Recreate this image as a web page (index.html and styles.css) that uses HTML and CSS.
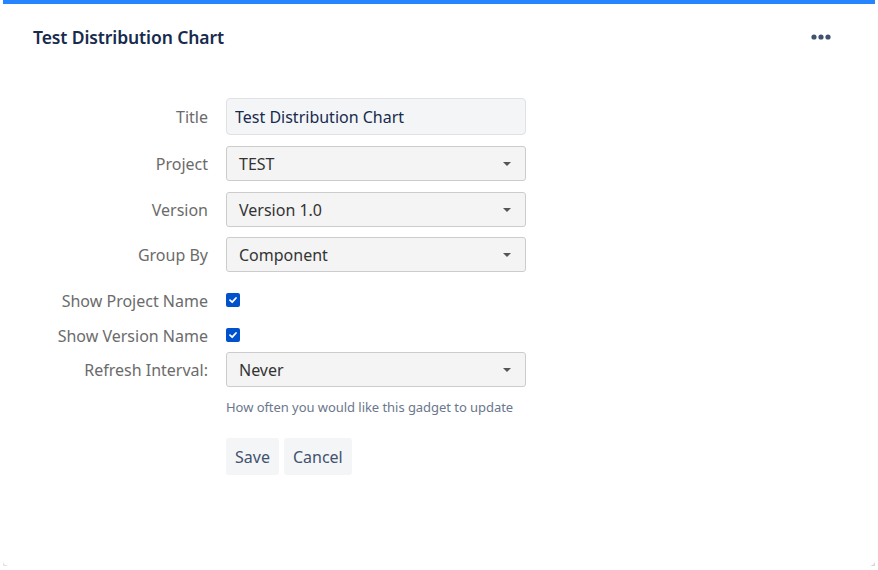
FILE: index.html
```html
<!DOCTYPE html>
<html lang="en">

<head>
    <meta charset="UTF-8">
    <meta name="viewport" content="width=device-width, initial-scale=1.0">
    <title>Test Distribution Chart</title>
    <link rel="stylesheet" href="styles.css">
</head>

<body>
    <div class="gadget">
        <div class="gadget-header">
            <h1>Test Distribution Chart</h1>
            <svg class="more" width="20" height="6" viewBox="0 0 20 6">
                <circle cx="3" cy="3" r="2.6" fill="#42526e"/>
                <circle cx="10" cy="3" r="2.6" fill="#42526e"/>
                <circle cx="17" cy="3" r="2.6" fill="#42526e"/>
            </svg>
        </div>

        <form class="gadget-form">
            <div class="field field-title">
                <label>Title</label>
                <input type="text" class="text-input" value="Test Distribution Chart">
            </div>

            <div class="field">
                <label>Project</label>
                <div class="select">TEST<span class="caret"></span></div>
            </div>

            <div class="field field-version">
                <label>Version</label>
                <div class="select">Version 1.0<span class="caret"></span></div>
            </div>

            <div class="field field-group">
                <label>Group By</label>
                <div class="select">Component<span class="caret"></span></div>
            </div>

            <div class="field field-check">
                <label>Show Project Name</label>
                <span class="checkbox">
                    <svg width="10" height="10" viewBox="0 0 10 10"><path d="M2 5.2 L4.2 7.2 L8 3" fill="none" stroke="#fff" stroke-width="1.8" stroke-linecap="round" stroke-linejoin="round"/></svg>
                </span>
            </div>

            <div class="field field-check">
                <label>Show Version Name</label>
                <span class="checkbox">
                    <svg width="10" height="10" viewBox="0 0 10 10"><path d="M2 5.2 L4.2 7.2 L8 3" fill="none" stroke="#fff" stroke-width="1.8" stroke-linecap="round" stroke-linejoin="round"/></svg>
                </span>
            </div>

            <div class="field field-last">
                <label>Refresh Interval:</label>
                <div class="select">Never<span class="caret"></span></div>
            </div>

            <p class="help">How often you would like this gadget to update</p>

            <div class="buttons">
                <button type="button">Save</button>
                <button type="button">Cancel</button>
            </div>
        </form>
    </div>
</body>

</html>
```

FILE: styles.css
```css
body {
    margin: 0 3px;
    background-color: #fff;
    font-family: "Noto Sans", "Open Sans", sans-serif;
    color: #172b4d;
}

.gadget {
    height: 562px;
    border-top: 4px solid #2684ff;
    border-radius: 0 0 5px 5px;
    background-color: #fff;
    box-shadow: 1px 2px 5px rgba(0, 0, 0, 0.25), 0 0 2px rgba(0, 0, 0, 0.12);
}

.gadget-header {
    display: flex;
    align-items: center;
    justify-content: space-between;
    height: 66px;
    padding: 0 44px 0 30px;
}

.gadget-header h1 {
    margin: 0;
    font-size: 17.5px;
    font-weight: 600;
    letter-spacing: -0.1px;
    color: #172b4d;
}

.more {
    display: block;
    margin-top: -1px;
}

.gadget-form {
    padding-top: 28px;
}

.field {
    display: flex;
    align-items: center;
    margin-bottom: 11px;
}

.field label {
    width: 205px;
    margin-right: 18px;
    text-align: right;
    font-size: 16px;
    color: #6b6b6b;
}

.text-input {
    box-sizing: border-box;
    width: 300px;
    height: 37px;
    margin: 0;
    padding: 0 8px;
    border: 1px solid #dfe1e6;
    border-radius: 4px;
    background-color: #f4f5f7;
    font-family: inherit;
    font-size: 16px;
    color: #172b4d;
}

.select {
    box-sizing: border-box;
    position: relative;
    width: 300px;
    height: 35px;
    padding: 0 12px;
    line-height: 35px;
    border: 1px solid #ccc;
    border-radius: 3px;
    background-color: #f4f4f4;
    font-size: 16px;
    color: #333;
}

.caret {
    position: absolute;
    right: 14px;
    top: 15px;
    border-left: 4px solid transparent;
    border-right: 4px solid transparent;
    border-top: 4px solid #555;
}

.field-version {
    margin-bottom: 10px;
}

.field-group {
    margin-bottom: 17px;
}

.field-check {
    height: 24px;
    margin-bottom: 11px;
}

.checkbox {
    display: flex;
    align-items: center;
    justify-content: center;
    width: 14px;
    height: 14px;
    border-radius: 2px;
    background-color: #0052cc;
    margin-top: -2px;
}

.field-check + .field-last {
    margin-top: -7px;
}

.field-last {
    margin-bottom: 0;
}

.help {
    margin: 11px 0 0 223px;
    font-size: 13px;
    letter-spacing: -0.05px;
    color: #6b778c;
}

.buttons {
    display: flex;
    gap: 5px;
    margin: 22px 0 0 223px;
}

button {
    height: 37px;
    padding: 0 9px;
    border: none;
    border-radius: 3px;
    background-color: #f4f5f7;
    font-family: inherit;
    font-size: 16px;
    color: #42526e;
}
```
